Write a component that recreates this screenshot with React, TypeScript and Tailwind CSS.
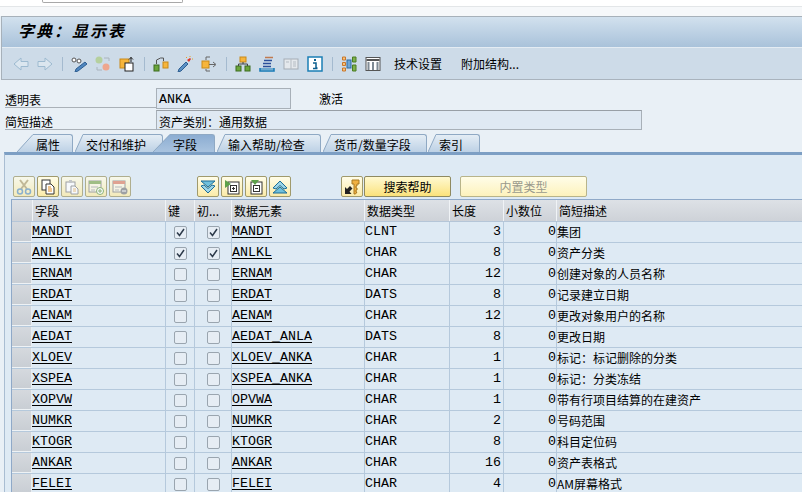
const rows = [
  ["MANDT", true, true, "MANDT", "CLNT", "3", "集团"],
  ["ANLKL", true, true, "ANLKL", "CHAR", "8", "资产分类"],
  ["ERNAM", false, false, "ERNAM", "CHAR", "12", "创建对象的人员名称"],
  ["ERDAT", false, false, "ERDAT", "DATS", "8", "记录建立日期"],
  ["AENAM", false, false, "AENAM", "CHAR", "12", "更改对象用户的名称"],
  ["AEDAT", false, false, "AEDAT_ANLA", "DATS", "8", "更改日期"],
  ["XLOEV", false, false, "XLOEV_ANKA", "CHAR", "1", "标记：标记删除的分类"],
  ["XSPEA", false, false, "XSPEA_ANKA", "CHAR", "1", "标记：分类冻结"],
  ["XOPVW", false, false, "OPVWA", "CHAR", "1", "带有行项目结算的在建资产"],
  ["NUMKR", false, false, "NUMKR", "CHAR", "2", "号码范围"],
  ["KTOGR", false, false, "KTOGR", "CHAR", "8", "科目定位码"],
  ["ANKAR", false, false, "ANKAR", "CHAR", "16", "资产表格式"],
  ["FELEI", false, false, "FELEI", "CHAR", "4", "AM屏幕格式"],
] as const;

function Ico({ children }: { children: React.ReactNode }) {
  return (
    <svg width="16" height="16" viewBox="0 0 16 16" fill="none">
      {children}
    </svg>
  );
}

function Slot({ children }: { children: React.ReactNode }) {
  return <div className="w-6 flex justify-center items-center">{children}</div>;
}

function Sep() {
  return (
    <div className="w-[10px] flex justify-center">
      <div className="w-px h-[14px] bg-[#a4bacf]" />
    </div>
  );
}

function Arrow({ flip }: { flip?: boolean }) {
  return (
    <Ico>
      <path
        d={flip ? "M1 5.500h7V2l7 6-7 6v-3.500H1z" : "M15 5.500H8V2L1 8l7 6v-3.500h7z"}
        fill="#dbe6ef"
        stroke="#9dbad0"
      />
    </Ico>
  );
}

function Tab({
  label,
  slant,
  body,
  active,
  gap,
}: {
  label: string;
  slant: number;
  body: number;
  active?: boolean;
  gap: string;
}) {
  const id = active ? "tabOn" : "tabOff";
  return (
    <div className={`flex h-[18px] ${gap} ${active ? "z-10 relative" : ""}`}>
      <svg width={slant} height="18" viewBox={`0 0 ${slant} 18`}>
        <defs>
          <linearGradient id={id} x1="0" y1="0" x2="0" y2="1">
            <stop offset="0" stopColor={active ? "#8cadd2" : "#e4edf5"} />
            <stop offset="1" stopColor={active ? "#a9c3df" : "#bdd1e5"} />
          </linearGradient>
        </defs>
        <path d={`M0 18L${slant} 0V18z`} fill={`url(#${id})`} />
        <path d={`M0 18L${slant} .5`} stroke="#8fa9c4" fill="none" />
      </svg>
      <div
        style={{ width: body }}
        className={`pl-[3px] text-xs leading-[20px] border-t border-r border-[#8fa9c4] rounded-tr-[3px] whitespace-nowrap ${
          active
            ? "bg-gradient-to-b from-[#8cadd2] to-[#a9c3df]"
            : "bg-gradient-to-b from-[#e4edf5] to-[#bdd1e5]"
        }`}
      >
        {label}
      </div>
    </div>
  );
}

function TBtn({ children, off }: { children: React.ReactNode; off?: boolean }) {
  return (
    <div
      className={`w-[22px] h-[21px] flex items-center justify-center rounded-[2px] border border-[#a09a6c] bg-gradient-to-b from-[#fffde9] to-[#fbeba8] ${
        off ? "opacity-75" : ""
      }`}
    >
      {children}
    </div>
  );
}

function Check({ on }: { on: boolean }) {
  return (
    <div className="w-[13px] h-[13px] rounded-[2px] border border-[#9aa5af] bg-[#e6edf4] flex items-center justify-center">
      {on && (
        <svg width="9" height="9" viewBox="0 0 9 9" fill="none">
          <path d="M1 4.500L3.500 7.500L8 1" stroke="#2d3a4a" strokeWidth="1.500" />
        </svg>
      )}
    </div>
  );
}

function Head({ w, children }: { w: string; children: React.ReactNode }) {
  return (
    <div className={`${w} shrink-0 h-full pl-[2px] text-xs leading-[21px] whitespace-nowrap overflow-hidden border-l border-[#f0f3f6]`}>
      {children}
    </div>
  );
}

const mono = "font-['Liberation_Mono','Noto_Sans_CJK_SC',monospace] text-[13.33px]";

export default function App() {
  return (
    <div className="w-[802px] h-[492px] overflow-hidden flex flex-col bg-[#e9f0f6] text-black font-['Noto_Sans_CJK_SC','Liberation_Sans',sans-serif]">
      <div className="h-[7px] bg-white border-b border-[#e3e6e8]">
        <div className="ml-[42px] w-[141px] h-[3px] border-x border-b border-[#a8a8a8] rounded-b-[2px]" />
      </div>
      <div className="h-[9px] bg-[#f6f8fa]" />

      <div className="ml-[1px] border-l border-t border-[#a7b1ba]">
        <div className="h-[30px] pl-[16px] pb-[4px] bg-gradient-to-b from-[#d2e1ee] to-[#a9c2da] flex items-center">
          <span className="text-base font-semibold italic tracking-[2px] leading-none">字典：显示表</span>
        </div>
        <div className="h-[33px] pl-[7px] bg-[#cddbe8] border-t border-[#e4ecf3] border-b border-b-[#a9b3bd] flex items-center">
          <Slot><Arrow /></Slot>
          <Slot><Arrow flip /></Slot>
          <Sep />
          <Slot>
            <Ico>
              <circle cx="3" cy="4" r="2" stroke="#555" fill="#fff" />
              <circle cx="8" cy="5" r="2" stroke="#555" fill="#fff" />
              <path d="M14 6l2 2-9 7-3 1 1-3z" fill="#4f86bf" stroke="#2f5f92" />
            </Ico>
          </Slot>
          <Slot>
            <Ico>
              <circle cx="4" cy="4" r="3.500" fill="#b5d09e" />
              <circle cx="11" cy="11" r="3.500" fill="#eea68e" />
              <path d="M9 2h5v3M7 14H2v-3" stroke="#aab4bd" />
            </Ico>
          </Slot>
          <Slot>
            <Ico>
              <rect x="1" y="3" width="9" height="9" fill="#f6b53c" stroke="#c98a18" />
              <rect x="6" y="7" width="8" height="8" fill="#fff" stroke="#222" />
              <path d="M12 1v5M10 3.500l2-2 2 2" stroke="#222" />
            </Ico>
          </Slot>
          <Sep />
          <Slot>
            <Ico>
              <rect x="1" y="9" width="5" height="6" fill="#6aa53c" stroke="#3d6d1e" />
              <rect x="10" y="6" width="5" height="6" fill="#f6b53c" stroke="#c98a18" />
              <path d="M3.500 8V4l4-2h3v3" stroke="#555" />
            </Ico>
          </Slot>
          <Slot>
            <Ico>
              <path d="M9 6l2 2-7 7-3 1 1-3z" fill="#5c90c4" stroke="#2f5f92" />
              <path d="M10 4l2 2 2-3-1-1z" fill="#d8342c" />
              <path d="M13 0v1M15 3h1M9 1l1 1" stroke="#e8a020" />
            </Ico>
          </Slot>
          <Slot>
            <Ico>
              <rect x="1" y="5" width="7" height="7" fill="#f6b53c" stroke="#c98a18" />
              <path d="M8 8.500h6M12 6l3 2.500-3 2.500M5 4V1h4M5 13v2h4" stroke="#666" />
            </Ico>
          </Slot>
          <Sep />
          <Slot>
            <Ico>
              <rect x="5" y="1" width="6" height="5" fill="#f6b53c" stroke="#c98a18" />
              <rect x="1" y="10" width="5" height="5" fill="#6aa53c" stroke="#3d6d1e" />
              <rect x="10" y="10" width="5" height="5" fill="#6aa53c" stroke="#3d6d1e" />
              <path d="M8 6v2M3.500 10V8h9v2" stroke="#444" />
            </Ico>
          </Slot>
          <Slot>
            <Ico>
              <path d="M6 1.500h8" stroke="#c07a50" strokeWidth="1.500" />
              <path d="M5 4.500h8M4 7.500h8M4 10.500h8" stroke="#2b4f9a" strokeWidth="1.500" />
              <path d="M1 12v3h14v-3" stroke="#1579b5" strokeWidth="1.500" />
              <path d="M1 13h14" stroke="#1579b5" strokeWidth="1" />
            </Ico>
          </Slot>
          <Slot>
            <Ico>
              <rect x="1" y="3" width="14" height="10" fill="#e4e8ec" stroke="#a5adb5" />
              <path d="M8 3v10M10 6h3M10 8h3M10 10h3M3 6h3" stroke="#b5bcc3" />
            </Ico>
          </Slot>
          <Slot>
            <Ico>
              <rect x="1" y="1" width="14" height="14" fill="#fff" stroke="#1a7fb5" strokeWidth="1.500" />
              <path d="M6 7h3v5h1.500M6 12.500h4.500" stroke="#0d5f8f" strokeWidth="1.500" />
              <rect x="7" y="3" width="2" height="2" fill="#0d5f8f" />
            </Ico>
          </Slot>
          <Sep />
          <Slot>
            <Ico>
              <path d="M1.500 1h3v3h-3zM1.500 6.500h3v3h-3zM1.500 12h3v3h-3z" fill="#f6c27c" stroke="#c8762a" />
              <rect x="6" y="4" width="4" height="8" fill="#6ea6d6" stroke="#2f6da3" />
              <path d="M11.500 1h3.500v5h-3.500zM11.500 9h3.500v6h-3.500z" fill="#7db04c" stroke="#4a7d20" />
            </Ico>
          </Slot>
          <Slot>
            <Ico>
              <rect x="1" y="1.500" width="14" height="13" fill="#fff" stroke="#555" />
              <path d="M1.500 4h13" stroke="#555" strokeWidth="2" />
              <path d="M3.500 6v8M8 6v8M12.500 6v8" stroke="#7f8a94" strokeWidth="2" />
            </Ico>
          </Slot>
          <span className="ml-[9px] text-xs">技术设置</span>
          <span className="ml-[19px] text-xs">附加结构...</span>
        </div>
      </div>

      <div className="pt-[8px] pl-[5px] flex flex-col">
        <div className="flex h-[22px]">
          <div className="w-[151px] h-[20px] text-xs leading-[24px] border-b border-[#aab1b8]">透明表</div>
          <div className={`w-[135px] h-[21px] border border-[#a8b0b8] bg-[#dfe9f3] pl-[2px] leading-[21px] ${mono}`}>ANKA</div>
          <div className="ml-[28px] text-xs leading-[21px]">激活</div>
        </div>
        <div className="flex h-[20px]">
          <div className="w-[151px] text-xs leading-[24px] border-b border-[#aab1b8]">简短描述</div>
          <div className="w-[486px] h-[20px] border border-[#a8b0b8] border-t-[#989fa6] pl-[2px] text-xs leading-[21px] bg-[#dfe9f3]">资产类别：通用数据</div>
        </div>
      </div>

      <div className="flex pl-[17px] mt-[4px] h-[18px]">
        <Tab label="属性" slant={16} body={40} gap="" />
        <Tab label="交付和维护" slant={8} body={80} gap="ml-[2px]" />
        <Tab label="字段" slant={17} body={45} active gap="-ml-[10px]" />
        <Tab label="输入帮助/检查" slant={8} body={96} gap="ml-[2px]" />
        <Tab label="货币/数量字段" slant={8} body={96} gap="ml-[2px]" />
        <Tab label="索引" slant={8} body={44} gap="ml-[1px]" />
      </div>

      <div className="ml-[4px] flex-1 bg-[#deeaf4] border-l border-t-[3px] border-[#a9bdd2] border-t-[#7d9fc4] pl-[6px] min-h-0">
        <div className="mt-[21px] h-[21px] flex pl-[2px]">
          <div className="flex gap-[2px]">
            <TBtn off>
              <Ico>
                <path d="M4 1l7 9M12 1L5 10" stroke="#b8a878" strokeWidth="2" />
                <circle cx="4" cy="12.500" r="2.500" stroke="#6f9dc0" strokeWidth="1.500" />
                <circle cx="12" cy="12.500" r="2.500" stroke="#6f9dc0" strokeWidth="1.500" />
              </Ico>
            </TBtn>
            <TBtn>
              <Ico>
                <rect x="2" y="1" width="8" height="10" fill="#fff" stroke="#333" />
                <path d="M6 5h5l3 3v7H6z" fill="#fff" stroke="#333" />
                <path d="M8 8h3M8 10h4M8 12h4" stroke="#e08a20" />
              </Ico>
            </TBtn>
            <TBtn off>
              <Ico>
                <rect x="2" y="3" width="9" height="10" fill="#fff" stroke="#888" />
                <rect x="5" y="1" width="3" height="3" fill="#bbb" />
                <path d="M7 7h4l3 3v5H7z" fill="#fff" stroke="#888" />
                <path d="M9 10h3M9 12h3" stroke="#e8b060" />
              </Ico>
            </TBtn>
            <TBtn off>
              <Ico>
                <rect x="1" y="2" width="12" height="11" fill="#fdf8e0" stroke="#888" />
                <rect x="1" y="2" width="12" height="3" fill="#8ab060" />
                <path d="M3 8h7M3 11h4" stroke="#aaa" />
                <circle cx="12" cy="12" r="3.500" fill="#fff" stroke="#6fa04a" />
                <path d="M10 12h4M12 10v4" stroke="#6fa04a" />
              </Ico>
            </TBtn>
            <TBtn off>
              <Ico>
                <rect x="1" y="2" width="12" height="11" fill="#fdf8e0" stroke="#888" />
                <rect x="1" y="2" width="12" height="3" fill="#e08a70" />
                <path d="M3 8h7M3 11h4" stroke="#aaa" />
                <circle cx="12" cy="12" r="3.500" fill="#888" />
                <path d="M10 12h4" stroke="#fff" />
              </Ico>
            </TBtn>
          </div>
          <div className="flex gap-[2px] ml-[66px]">
            <TBtn>
              <Ico>
                <path d="M1 2h14l-7 6z" fill="#6fc0dc" stroke="#1c6d97" />
                <path d="M1 7l7 7 7-7-3-1-4 3.500L4 6z" fill="#9ad4e8" stroke="#1c6d97" />
              </Ico>
            </TBtn>
            <TBtn>
              <Ico>
                <rect x="4" y="3" width="11" height="12" fill="#fff" stroke="#333" />
                <path d="M1 1l6 4-6 4z" fill="#5ca04a" />
                <rect x="6.500" y="6.500" width="6" height="6" stroke="#333" />
                <path d="M8 9.500h3M9.500 8v3" stroke="#333" />
              </Ico>
            </TBtn>
            <TBtn>
              <Ico>
                <rect x="3" y="3" width="11" height="12" fill="#fff" stroke="#333" />
                <path d="M3 1h8L7 6z" fill="#5ca04a" />
                <rect x="5.500" y="6.500" width="6" height="6" stroke="#333" />
                <path d="M7 9.500h3" stroke="#333" />
              </Ico>
            </TBtn>
            <TBtn>
              <Ico>
                <path d="M1 14h14l-7-6z" fill="#6fc0dc" stroke="#1c6d97" />
                <path d="M1 9l7-7 7 7-3 1-4-3.500L4 10z" fill="#9ad4e8" stroke="#1c6d97" />
              </Ico>
            </TBtn>
          </div>
          <div className="flex ml-[50px] gap-[1px]">
            <TBtn>
              <Ico>
                <path d="M8 1h7v4h-2v2h-1v2h1v2h-1v2h1l-1.500 2H10V5H8z" fill="#f0b040" stroke="#a87820" />
                <path d="M1 15V8l2 2 3-3 2.500 2.500-3 3 2 2.500z" fill="#222" />
              </Ico>
            </TBtn>
            <div className="w-[87px] h-[21px] rounded-[2px] border border-[#8f8a60] bg-gradient-to-b from-[#fff9d0] to-[#fbe27a] text-xs text-center leading-[20px]">搜索帮助</div>
            <div className="ml-[8px] w-[127px] h-[21px] rounded-[2px] border border-[#b8b48a] bg-gradient-to-b from-[#fffde8] to-[#fdf2bc] text-xs text-[#9a9a8c] text-center leading-[20px]">内置类型</div>
          </div>
        </div>

        <div className="mt-[2px] border-t border-[#8fa9c8] border-l">
          <div className="h-[22px] flex items-stretch bg-gradient-to-b from-[#dde1e6] to-[#ced2d8] border-b border-[#b5c6d8]">
            <div className="w-[20px] shrink-0" />
            <Head w="w-[133px]">字段</Head>
            <Head w="w-[29px]">键</Head>
            <Head w="w-[37px]">初...</Head>
            <Head w="w-[133px]">数据元素</Head>
            <Head w="w-[85px]">数据类型</Head>
            <Head w="w-[54px]">长度</Head>
            <Head w="w-[53px]">小数位</Head>
            <Head w="flex-1">简短描述</Head>
          </div>
          {rows.map((r) => (
            <div key={r[0]} className="h-[21px] flex items-stretch border-b border-[#b5c9dc]">
              <div className="w-[20px] shrink-0 bg-gradient-to-b from-[#d5d9de] to-[#c9ced4] border-r border-[#e8edf2] border-b border-b-[#eef2f5]" />
              <div className={`w-[133px] shrink-0 underline underline-offset-2 leading-[20px] ${mono}`}>{r[0]}</div>
              <div className="w-[29px] shrink-0 border-l border-[#b5c9dc] flex items-center justify-center"><Check on={r[1]} /></div>
              <div className="w-[37px] shrink-0 border-l border-[#b5c9dc] flex items-center justify-center"><Check on={r[2]} /></div>
              <div className={`w-[133px] shrink-0 border-l border-[#b5c9dc] underline underline-offset-2 leading-[20px] ${mono}`}>{r[3]}</div>
              <div className={`w-[85px] shrink-0 border-l border-[#b5c9dc] leading-[20px] ${mono}`}>{r[4]}</div>
              <div className={`w-[54px] shrink-0 border-l border-[#b5c9dc] text-right pr-[2px] leading-[20px] ${mono}`}>{r[5]}</div>
              <div className={`w-[53px] shrink-0 border-l border-[#b5c9dc] text-right leading-[20px] ${mono}`}>0</div>
              <div className="flex-1 border-l border-[#b5c9dc] text-xs leading-[20px] whitespace-nowrap">{r[6]}</div>
            </div>
          ))}
        </div>
      </div>
    </div>
  );
}
